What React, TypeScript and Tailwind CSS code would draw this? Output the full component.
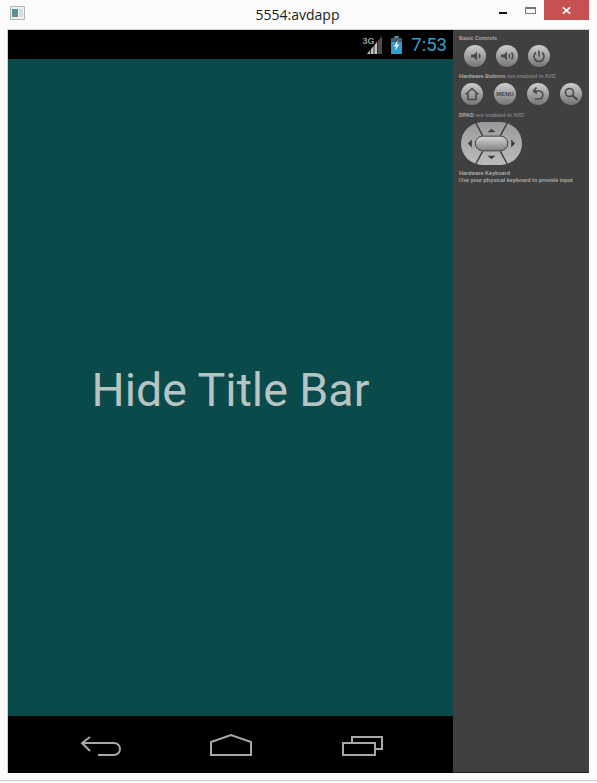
const label = "font-['Liberation_Sans',sans-serif] text-[5.4px] leading-[7px] font-bold text-[#adadad] whitespace-nowrap";
const dim = "text-[#808080]";

function RoundButton({ children }: { children: React.ReactNode }) {
  return (
    <div className="flex h-[22px] w-[22px] items-center justify-center rounded-full bg-gradient-to-b from-[#cfcfcf] to-[#757575]">
      <svg viewBox="0 0 22 22" className="h-[22px] w-[22px]" fill="none" stroke="#4a4a4a" strokeWidth="1.6">
        {children}
      </svg>
    </div>
  );
}

function WindowIcon() {
  return (
    <div className="flex h-[14px] w-[15px] items-center gap-px rounded-[1px] border border-[#b5b5b5] bg-[#eef1f1] p-px">
      <div className="h-[8px] w-[7px] bg-[#5b8f97]" />
      <div className="h-[8px] w-[4px] bg-[#d3dede]" />
    </div>
  );
}

export default function App() {
  return (
    <div className="flex h-[783px] w-[597px] flex-col overflow-hidden bg-[#fbfbfb] font-['Open_Sans',sans-serif]">
      {/* title bar */}
      <div className="relative flex h-[29px] shrink-0 items-center pl-[10px]">
        <div className="mt-[-3px]">
          <WindowIcon />
        </div>
        <div className="absolute left-0 right-[2px] top-[6px] text-center text-[14px] leading-[18px] text-[#1c1c1c]">5554:avdapp</div>
        <div className="absolute right-[8px] top-0 flex h-[20px] items-start">
          <div className="mr-[18px] mt-[12px] h-[2px] w-[8px] bg-[#111]" />
          <div className="mr-[8px] mt-[7px] h-[7px] w-[11px] border border-t-2 border-[#777]" />
          <div className="flex h-[20px] w-[45px] items-center justify-center bg-[#c75050]">
            <svg viewBox="0 0 10 10" className="h-[9px] w-[9px]" stroke="#fff" strokeWidth="1.8">
              <path d="M1 1.500l8 7M9 1.500l-8 7" />
            </svg>
          </div>
        </div>
      </div>

      <div className="ml-[7px] mr-[7px] flex h-[744px] border-l border-t border-[#d0d0d0]">
        {/* device screen */}
        <div className="flex w-[445px] shrink-0 flex-col bg-black">
          <div className="flex h-[29px] shrink-0 items-center justify-end pr-[6px]">
            <svg viewBox="0 0 22 20" className="mr-[7px] mt-[2px] h-[20px] w-[22px]">
              <path d="M5 18L20 0v18z" fill="#4d4d4d" />
              <path d="M5 18L16 4.800V18z" fill="#c4c4c4" />
              <path d="M8.500 18V6M12 18V3M15.500 18V1" stroke="#000" strokeWidth="0.8" />
              <text x="0.500" y="8" fontSize="9" fontWeight="700" fill="#9a9a9a" fontFamily="Liberation Sans, sans-serif">3G</text>
            </svg>
            <svg viewBox="0 0 12 18" preserveAspectRatio="none" className="mr-[9px] mt-[1px] h-[18px] w-[11px]">
              <rect x="3.500" y="0" width="5" height="2" fill="#5f8a9e" />
              <rect x="0" y="2" width="12" height="16" fill="#2f9ccb" />
              <rect x="0" y="2" width="12" height="4" fill="#41606e" />
              <path d="M7.500 4L3 10.500h2.600L4.400 15 9 8.600H6.400z" fill="#eef6fa" />
            </svg>
            <span className="font-['Roboto',sans-serif] text-[18.5px] leading-[24px] text-[#3a9ecb]">7:53</span>
          </div>
          <div className="flex flex-1 items-center justify-center bg-[#0a4a4a] pt-[6px] font-['Roboto',sans-serif] text-[46.5px] text-[#b6c4c4]">
            Hide Title Bar
          </div>
          <div className="flex h-[57px] shrink-0 items-center">
            <svg viewBox="0 0 445 57" className="h-[57px] w-[445px]" fill="none" stroke="#a8a8a8" strokeWidth="2">
              <path d="M82 21l-8 6 8 8M74 27h32a6 6 0 0 1 0 12H90" />
              <path d="M203 39V26l20-7 20 7v13z" />
              <path d="M335 27h32v12h-32z" />
              <path d="M344 27v-6h30v12h-7" />
            </svg>
          </div>
        </div>

        {/* emulator controls */}
        <div className="flex w-[136px] shrink-0 flex-col border-b border-[#222] bg-[#404040] pt-[5px]">
          <div className={`${label} pl-[6px]`}>Basic Controls</div>
          <div className="mt-[3px] flex gap-[10px] pl-[11px]">
            <RoundButton>
              <path d="M7 9.500h3l3-3v9l-3-3H7z" fill="#4a4a4a" stroke="none" />
              <path d="M15 9c1 1.200 1 2.800 0 4" />
            </RoundButton>
            <RoundButton>
              <path d="M5 9.500h3l3-3v9l-3-3H5z" fill="#4a4a4a" stroke="none" />
              <path d="M13 9c.8 1.200.8 2.800 0 4M15.500 7.500c1.500 2 1.500 5 0 7" />
            </RoundButton>
            <RoundButton>
              <path d="M8 7.500a5 5 0 1 0 6 0M11 5.500v6" />
            </RoundButton>
          </div>
          <div className={`${label} mt-[6px] pl-[6px]`}>
            Hardware Buttons <span className={dim}>not enabled in AVD</span>
          </div>
          <div className="mt-[3px] flex gap-[11px] pl-[8px]">
            <RoundButton>
              <path d="M4.500 11.500L11 5.500l6.500 6M7 10.500v6h8v-6" />
            </RoundButton>
            <RoundButton>
              <text x="11" y="13" textAnchor="middle" fontSize="6" fontWeight="700" fill="#444" stroke="none" fontFamily="Liberation Sans, sans-serif">MENU</text>
            </RoundButton>
            <RoundButton>
              <path d="M9.500 4.500L6.500 8l3.500 2.500M7 8h5.500c4.500 0 4.500 8-.5 8H8" />
            </RoundButton>
            <RoundButton>
              <circle cx="9.500" cy="9.500" r="4" />
              <path d="M12.500 12.500l5 4.500" strokeWidth="2.200" />
            </RoundButton>
          </div>
          <div className={`${label} mt-[7px] pl-[6px]`}>
            DPAD <span className={dim}>not enabled in AVD</span>
          </div>
          <svg viewBox="0 0 62 44" preserveAspectRatio="none" className="ml-[8px] mt-[3px] h-[43px] w-[61px] shrink-0">
            <defs>
              <linearGradient id="pad" x1="0" y1="0" x2="0" y2="1">
                <stop offset="0" stopColor="#9a9a9a" />
                <stop offset="1" stopColor="#bcbcbc" />
              </linearGradient>
              <linearGradient id="pill" x1="0" y1="0" x2="0" y2="1">
                <stop offset="0" stopColor="#d6d6d6" />
                <stop offset="1" stopColor="#808080" />
              </linearGradient>
            </defs>
            <rect x="0" y="0" width="62" height="44" rx="22" fill="url(#pad)" />
            <path d="M15 1L22 14M47 1L40 14M15 43L22 30M47 43L40 30" stroke="#3e3e3e" strokeWidth="1.500" />
            <path d="M31 7l-4 3.500h8zM31 38l-4-3.500h8zM7 22l4-4v8zM55 22l-4-4v8z" fill="#3f3f3f" />
            <rect x="14.500" y="14.500" width="33" height="15" rx="7.500" fill="url(#pill)" stroke="#3e3e3e" />
          </svg>
          <div className={`${label} mt-[5px] pl-[6px]`}>Hardware Keyboard</div>
          <div className={`${label} pl-[6px]`}>Use your physical keyboard to provide input</div>
        </div>
      </div>
      <div className="mt-[7px] h-px w-full bg-[#cfcfcf]" />
    </div>
  );
}
